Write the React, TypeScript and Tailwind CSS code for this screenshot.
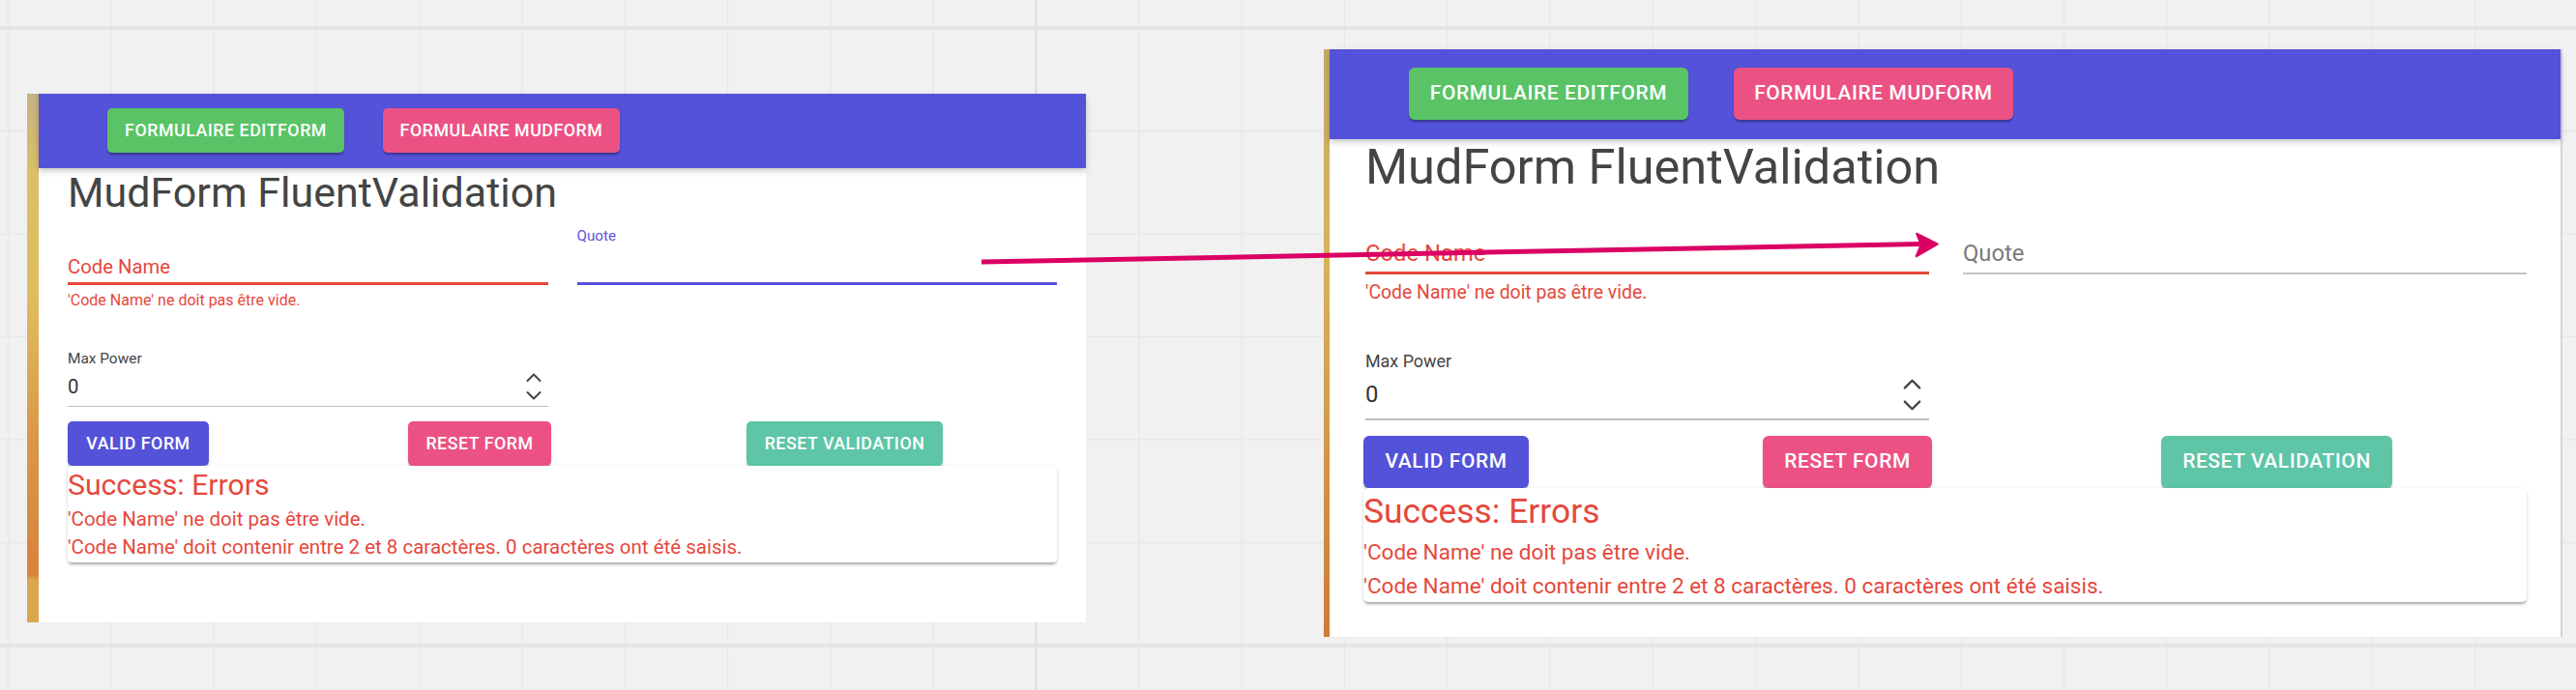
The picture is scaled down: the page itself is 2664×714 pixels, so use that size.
import React from "react";

type Size = "sm" | "lg";

// two copies of the same MudBlazor page, pasted on a board at different scales
const sz = {
  sm: {
    wrap: "left-[28px] top-[97px] w-[1095px] h-[547px]",
    strip: "w-[12px] bg-[linear-gradient(to_bottom,#c6b283_0%,#dcc066_15%,#dfbb5d_40%,#d99748_65%,#d7843b_91%,#dba64e_92%,#d9a64c_100%)]",
    edge: "hidden",
    header: "h-[77px] pl-[71px] pt-[15px] gap-[40px]",
    topBtn: "h-[46px] w-[245px] rounded-[5px] text-[17.8px]",
    body: "pl-[30px] pr-[30px]",
    title: "text-[43px] leading-[50px]",
    grid: "gap-x-[30px]",
    floatRow: "h-[40px] text-[15.2px]",
    inputRow: "h-[28px] text-[20.3px] leading-[24px]",
    line: "h-[3px]",
    grayUnder: "h-[1px]",
    helper: "mt-[7px] text-[16px] leading-[18px]",
    maxLabel: "mt-[42px] text-[15.4px] leading-[18px]",
    valueRow: "h-[40px] text-[20.3px]",
    chev: "w-[16px] h-[28px] mr-[7px]",
    btnRow: "mt-[15px]",
    btn: "h-[46px] rounded-[5px] text-[17.8px]",
    valid: "w-[146px]",
    reset: "ml-[206px] w-[148px]",
    resetVal: "ml-[202px] w-[203px]",
    card: "h-[100px] pt-[2px] rounded-[4px]",
    success: "text-[30.2px] leading-[36px]",
    msgs: "mt-[3px] text-[20.5px] leading-[29px]",
  },
  lg: {
    wrap: "left-[1369px] top-[51px] w-[1281px] h-[608px]",
    strip: "w-[6px] bg-[linear-gradient(to_bottom,#c7ad66_0%,#d6b35a_35%,#d39a48_65%,#cf7b33_100%)]",
    edge: "w-[2px] bg-[#d2d5db]",
    header: "h-[93px] pl-[82px] pt-[19px] gap-[47px]",
    topBtn: "h-[54px] w-[289px] rounded-[6px] text-[20.9px]",
    body: "pl-[37px] pr-[35px]",
    title: "text-[50.5px] leading-[58px]",
    grid: "gap-x-[35px]",
    floatRow: "h-[46px] text-[17.9px]",
    inputRow: "h-[33px] text-[23.8px] leading-[28px]",
    line: "h-[3px]",
    grayUnder: "h-[2px]",
    helper: "mt-[9px] text-[19.4px] leading-[20px]",
    maxLabel: "mt-[51px] text-[17.9px] leading-[20px]",
    valueRow: "h-[49px] text-[23.8px]",
    chev: "w-[19px] h-[33px] mr-[8px]",
    btnRow: "mt-[16px] -ml-[2px]",
    btn: "h-[54px] rounded-[6px] text-[20.9px]",
    valid: "w-[171px]",
    reset: "ml-[242px] w-[175px]",
    resetVal: "ml-[237px] w-[239px]",
    card: "h-[118px] pt-[2.5px] rounded-[5px] -ml-[2px]",
    success: "text-[35.4px] leading-[42px]",
    msgs: "mt-[4px] text-[22.5px] leading-[35px]",
  },
};

const btnBase =
  "flex items-center justify-center font-medium uppercase tracking-[0.03em] text-white shadow-[0_3px_2px_-1px_rgba(0,0,0,0.25),0_2px_3px_0_rgba(0,0,0,0.12)]";

function Chevrons({ className }: { className: string }) {
  return (
    <svg viewBox="0 0 16 28" className={className} fill="none" stroke="#444" strokeWidth="2" strokeLinecap="round" strokeLinejoin="round">
      <polyline points="1.5,8 8,1.5 14.5,8" />
      <polyline points="1.5,20 8,26.5 14.5,20" />
    </svg>
  );
}

function Panel({ size, focused }: { size: Size; focused: boolean }) {
  const c = sz[size];
  return (
    <div className={`absolute flex bg-white ${c.wrap}`}>
      <div className={`shrink-0 ${c.strip}`} />
      <div className="flex min-w-0 flex-1 flex-col">
        <div className={`relative z-10 flex shrink-0 items-start bg-[#5452d9] shadow-[0_3px_6px_rgba(0,0,0,0.22)] ${c.header}`}>
          <div className={`${btnBase} ${c.topBtn} bg-[#59c365]`}>Formulaire EditForm</div>
          <div className={`${btnBase} ${c.topBtn} bg-[#eb5283]`}>Formulaire MudForm</div>
        </div>

        <div className={`flex flex-col ${c.body}`}>
          <h3 className={`text-[#444] ${c.title}`}>MudForm FluentValidation</h3>

          <div className={`grid grid-cols-2 ${c.grid}`}>
            {/* Code Name: empty + required */}
            <div className="flex flex-col">
              <div className={c.floatRow} />
              <div className={`text-[#e5483c] ${c.inputRow}`}>Code Name</div>
              <div className={`bg-[#e5483c] ${c.line}`} />
              <div className={`text-[#e5483c] ${c.helper}`}>'Code Name' ne doit pas être vide.</div>
            </div>
            {/* Quote */}
            <div className="flex flex-col">
              <div className={`flex items-center text-[#5a55d8] ${c.floatRow}`}>{focused ? "Quote" : ""}</div>
              <div className={`text-[#7a7a7a] ${c.inputRow}`}>{focused ? "" : "Quote"}</div>
              <div className={`flex items-end ${c.line}`}>
                <div className={focused ? `w-full bg-[#5452d9] ${c.line}` : `w-full bg-[#c4c4c4] ${c.grayUnder}`} />
              </div>
            </div>
          </div>

          <div className={`grid grid-cols-2 ${c.grid}`}>
            <div className="flex flex-col">
              <div className={`text-[#444] ${c.maxLabel}`}>Max Power</div>
              <div className={`flex items-center justify-between text-[#333] ${c.valueRow}`}>
                <span>0</span>
                <Chevrons className={c.chev} />
              </div>
              <div className={`bg-[#bdbdbd] ${c.grayUnder}`} />
            </div>
          </div>

          <div className={`flex ${c.btnRow}`}>
            <div className={`${btnBase} ${c.btn} ${c.valid} bg-[#5452d9]`}>Valid Form</div>
            <div className={`${btnBase} ${c.btn} ${c.reset} bg-[#eb5283]`}>Reset Form</div>
            <div className={`${btnBase} ${c.btn} ${c.resetVal} bg-[#5ec5a7]`}>Reset Validation</div>
          </div>

          <div className={`flex flex-col bg-white text-[#e5483c] shadow-[0_3px_3px_-1px_rgba(0,0,0,0.3),0_1px_4px_0_rgba(0,0,0,0.1)] ${c.card}`}>
            <div className={c.success}>Success: Errors</div>
            <div className={c.msgs}>
              <div>'Code Name' ne doit pas être vide.</div>
              <div>'Code Name' doit contenir entre 2 et 8 caractères. 0 caractères ont été saisis.</div>
            </div>
          </div>
        </div>
      </div>
      <div className={`shrink-0 ${c.edge}`} />
    </div>
  );
}

const vx = Array.from({ length: 26 }, (_, i) => 8.5 + i * 106.3);
const hy = Array.from({ length: 7 }, (_, i) => 29 + i * 106.5);

export default function App() {
  return (
    <div className="relative h-[714px] w-[2664px] overflow-hidden bg-[#f1f1f1] font-['Roboto',sans-serif]">
      {/* board grid */}
      <svg className="absolute inset-0" width="2664" height="714" viewBox="0 0 2664 714">
        {vx.map((x, i) => (
          <line key={"v" + i} x1={x} y1="0" x2={x} y2="714" stroke={i === 10 ? "#e3e3e3" : "#e8e8e8"} strokeWidth={i === 10 ? 3 : 1.5} />
        ))}
        {hy.map((y, i) => (
          <line key={"h" + i} x1="0" y1={y} x2="2664" y2={y} stroke={i === 0 || i === 6 ? "#e4e4e4" : "#e8e8e8"} strokeWidth={i === 0 || i === 6 ? 4 : 1.5} />
        ))}
      </svg>

      <Panel size="sm" focused={true} />
      <Panel size="lg" focused={false} />

      {/* annotation arrow */}
      <svg className="pointer-events-none absolute inset-0 z-20" width="2664" height="714" viewBox="0 0 2664 714">
        <line x1="1015" y1="271" x2="1987" y2="252.6" stroke="#db0064" strokeWidth="5" />
        <path d="M1982.5 242 L2003.5 252.5 L1982 265 L1987 253.2 Z" fill="#db0064" stroke="#db0064" strokeWidth="2.5" strokeLinejoin="round" />
      </svg>
    </div>
  );
}
